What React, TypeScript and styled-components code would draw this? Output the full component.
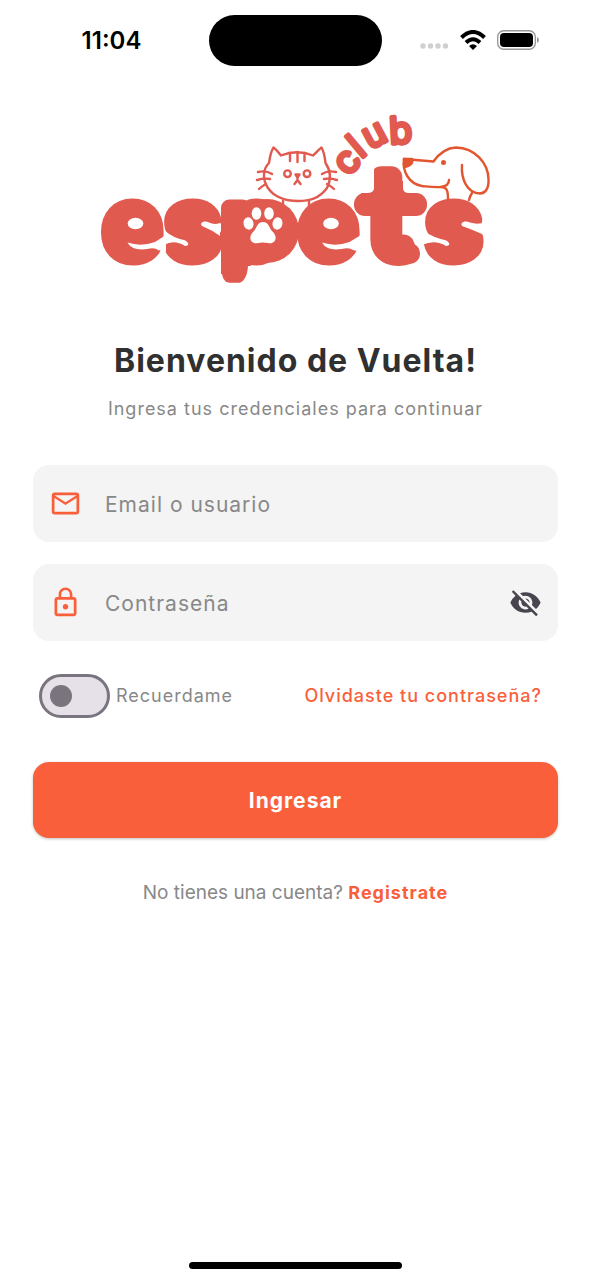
import React, { useState } from "react";
import styled, { createGlobalStyle } from "styled-components";
import { MdLockOutline, MdMailOutline, MdVisibility, MdVisibilityOff } from "react-icons/md";

const accent = "#fa5f3c";
const logoRed = "#e15a50";

const GlobalStyle = createGlobalStyle`
  * { box-sizing: border-box; }
  body {
    margin: 0;
    background: #fff;
    font-family: Inter, "Liberation Sans", sans-serif;
  }
  button, input { font: inherit; }
`;

const Screen = styled.div`
  min-height: 100vh;
  display: flex;
  flex-direction: column;
`;

const StatusBar = styled.header`
  display: grid;
  grid-template-columns: 1fr 173px 1fr;
  align-items: center;
  height: 80px;
`;

const Clock = styled.time`
  padding-left: 14px;
  text-align: center;
  font-size: 24px;
  font-weight: 600;
  color: #000;
`;

const Island = styled.div`
  height: 51px;
  border-radius: 26px;
  background: #000;
`;

const StatusIcons = styled.div`
  display: flex;
  align-items: center;
  justify-content: flex-end;
  gap: 10px;
  padding-right: 51px;
`;

const Main = styled.main`
  flex: 1;
  display: flex;
  flex-direction: column;
  align-items: center;
  padding: 25px 33px 0;
`;

const Logo = styled.svg`
  display: block;
  width: 400px;
  max-width: 100%;
  height: auto;
`;

const Title = styled.h1`
  margin: 51px 0 0;
  font-size: 32px;
  line-height: 40px;
  font-weight: 700;
  letter-spacing: 1px;
  color: #303030;
`;

const Subtitle = styled.p`
  margin: 16px 0 0;
  font-size: 18px;
  line-height: 24px;
  letter-spacing: 1px;
  color: #888;
`;

const Form = styled.form`
  align-self: stretch;
  display: flex;
  flex-direction: column;
  gap: 22px;
  margin-top: 44px;
`;

const Field = styled.label`
  display: flex;
  align-items: center;
  height: 77px;
  padding: 0 16px;
  border-radius: 16px;
  background: #f4f4f4;
  color: ${accent};
`;

const FieldInput = styled.input`
  flex: 1;
  min-width: 0;
  margin-left: 23px;
  padding: 2px 0 0;
  border: 0;
  outline: 0;
  background: none;
  font-size: 21px;
  letter-spacing: 1px;
  color: #303030;
  &::placeholder { color: #888; opacity: 1; }
`;

const IconButton = styled.button`
  display: flex;
  padding: 0;
  border: 0;
  background: none;
  color: #49454f;
  cursor: pointer;
`;

const Options = styled.div`
  display: flex;
  align-items: center;
  justify-content: space-between;
  margin-top: 11px;
  padding: 0 16px 0 6px;
  font-size: 18px;
  line-height: 24px;
  letter-spacing: 1px;
`;

const Remember = styled.label`
  display: flex;
  align-items: center;
  gap: 6px;
  color: #888;
`;

const Switch = styled.input`
  appearance: none;
  display: flex;
  align-items: center;
  width: 71px;
  height: 44px;
  margin: 0;
  padding: 0 8px;
  border: 3px solid #79747e;
  border-radius: 22px;
  background: #e6e0e9;
  cursor: pointer;
  &::before {
    content: "";
    width: 22px;
    height: 22px;
    border-radius: 50%;
    background: #79747e;
  }
  &:checked { justify-content: flex-end; background: ${accent}; border-color: ${accent}; }
  &:checked::before { background: #fff; }
`;

const TextLink = styled.a<{ $weight: number }>`
  color: ${accent};
  font-size: 18px;
  font-weight: ${(p) => p.$weight};
  letter-spacing: 1px;
  text-decoration: none;
`;

const Submit = styled.button`
  height: 76px;
  margin-top: 22px;
  border: 0;
  border-radius: 16px;
  background: ${accent};
  box-shadow: 0 1px 3px rgba(0, 0, 0, 0.25);
  color: #fff;
  font-size: 21px;
  font-weight: 700;
  letter-spacing: 1px;
  cursor: pointer;
`;

const SignUp = styled.p`
  margin: 43px 0 0;
  font-size: 19px;
  line-height: 24px;
  color: #888;
`;

const HomeIndicator = styled.div`
  width: 36%;
  height: 7px;
  margin: 0 auto 11px;
  border-radius: 4px;
  background: #000;
`;

function BrandLogo() {
  return (
    <Logo viewBox="95 105 400 185" role="img" aria-label="espets club">
      <g fontFamily='Inter, "Liberation Sans", sans-serif' fontWeight="700" fill={logoRed} stroke={logoRed} strokeLinejoin="round">
        <text fontSize="88" y="256" strokeWidth="17" x="105 167 223 301">espe</text>
        <text fontSize="113" fontWeight="400" y="254" x="370" strokeWidth="22">t</text>
        <text fontSize="88" y="256" x="428" strokeWidth="17">s</text>
      </g>
      <g fill="#fff">
        <path d="M350 168H373V188Q373 193 366 193H350Z" />
        <path d="M422 168H402V188Q402 193 408 193H422Z" />
        <path d="M218 274H221Q222 284 233 284V287H218Z" />
        <path d="M254 266H247Q246 284 233 284V287H254Z" />
      </g>
      <rect x="353" y="193" width="73" height="23" rx="11" fill={logoRed} />
      <rect x="384" y="243" width="35" height="21" rx="10" fill={logoRed} />
      <circle cx="266" cy="231" r="32" fill={logoRed} />
      <text
        fontFamily='Inter, "Liberation Sans", sans-serif'
        fontSize="37"
        fontWeight="400"
        fill={logoRed}
        stroke={logoRed}
        strokeWidth="4"
        strokeLinejoin="round"
        x="348 360 369 389"
        y="177 159 150 144"
        rotate="-50 -40 -28 -3"
      >
        club
      </text>
      {/* openings of the rounded wordmark */}
      <g fill="#fff">
        <ellipse cx="134.500" cy="223.500" rx="7.800" ry="5.800" />
        <ellipse cx="330" cy="223.500" rx="7.800" ry="5.800" />
        <path d="M126.500 242.500Q140 247 154 242L165 235V252L157 250Q154 247 146 249Q131 251 126.500 242.500Z" />
        <path d="M321 242.500Q334.500 247 348.500 242L360 235V252L352 250Q348.500 247 340.500 249Q325.500 251 321 242.500Z" />
        <path d="M219 223Q213 225 208 222.500C203 220 198 223 201 226Q211 230 219 236Z" />
        <path d="M163 230Q172 238 183 240C188 242 189 246 184 246Q173 239 163 245Z" />
        <path d="M485 222Q477 225 469 222.500C463 220 459 223 461 226Q475 231 485 236Z" />
        <path d="M421 230Q433 238 444 240C449 242 450 246 445 246Q434 239 421 245Z" />
      </g>
      <g fill="#fff">
        <ellipse cx="247.5" cy="223.5" rx="5" ry="6.2" transform="rotate(-12 247.5 223.5)" />
        <ellipse cx="255.5" cy="213.5" rx="4.8" ry="6.2" />
        <ellipse cx="268" cy="213.5" rx="4.8" ry="6.2" />
        <ellipse cx="276.5" cy="223.5" rx="5" ry="6.2" transform="rotate(12 276.5 223.5)" />
        <path d="M262 222c-6 0-6 6-9 9-7 6-3 14 4 12q5-1 10 0c7 2 11-6 4-12-3-3-3-9-9-9Z" />
      </g>
      <g fill="none" stroke={logoRed} strokeWidth="2.4" strokeLinecap="round" strokeLinejoin="round">
        <path d="M268 163C269 156 270 151 272.500 147.500C276 150 278 153 280 155.500Q296 149 312 155.500C315 153 317 150 320.500 147.500C323 152 324 158 324.500 163C330 171 330 180 326 188C318 199 308 201 297 201C285 201 273 197 267 188C261 179 262 169 268 163Z" />
        <path d="M289 153v8M296.500 152v10M303.500 153v8M282 201v8M308 201v8" />
        <circle cx="286.500" cy="173.700" r="3.300" />
        <circle cx="306" cy="173.700" r="3.300" />
        <path d="M294.500 174.500h4l-2 3ZM296.500 177v4M293.500 184l3-4 3 4" />
        <path d="M257 172q8-2 14 2M256 180q7-2 13-1M258 189q3-3 7-5M335 172q-8-2-14 2M336 180q-7-2-13-1M333 189q-3-3-7-5" />
      </g>
      <g fill="none" stroke="#e2552f" strokeWidth="2.400" strokeLinecap="round" strokeLinejoin="round">
        <path d="M403 159L432.500 161.500Q442 148 455 147.500C474 148 487 163 487.500 179C488 189 484 193.500 479 193.500C466 193 460 179 461 165" />
        <path d="M403 159C401 171 408 184 421 186C431 187 448 190 448 180M440 187C447 187 447 193 447 200M471 193Q469 196 468 200" />
        <path d="M403 159h8q2 6-7 8Z" fill="#e2552f" />
        <circle cx="442.500" cy="162.500" r="1.300" fill="#e2552f" />
      </g>
    </Logo>
  );
}

function SystemIcons() {
  return (
    <StatusIcons>
      <svg width="32" height="20" viewBox="0 0 32 20" fill="#cfcfcf" aria-hidden="true">
        <circle cx="5" cy="16" r="2.700" />
        <circle cx="12.500" cy="16" r="2.700" />
        <circle cx="20" cy="16" r="2.700" />
        <circle cx="27.500" cy="16" r="2.700" />
      </svg>
      <svg width="27" height="20" viewBox="0 0 27 20" fill="none" stroke="#000" strokeWidth="4" aria-hidden="true">
        <path d="M1.500 7.500Q13-3.500 24.500 7.500M6 12.500Q13 6 20 12.500" />
        <path d="M13 20L9 16Q13 12.500 17 16Z" fill="#000" stroke="none" />
      </svg>
      <svg width="43" height="20" viewBox="0 0 43 20" aria-hidden="true">
        <rect x="0.700" y="0.700" width="37.600" height="18.600" rx="6" fill="none" stroke="#999" strokeWidth="1.400" />
        <rect x="3" y="3" width="33" height="14" rx="4" />
        <path d="M40 7q2 1 2 3t-2 3Z" fill="#999" />
      </svg>
    </StatusIcons>
  );
}

export default function App() {
  const [visible, setVisible] = useState(false);
  return (
    <Screen>
      <GlobalStyle />
      <StatusBar>
        <Clock>11:04</Clock>
        <Island />
        <SystemIcons />
      </StatusBar>
      <Main>
        <BrandLogo />
        <Title>Bienvenido de Vuelta!</Title>
        <Subtitle>Ingresa tus credenciales para continuar</Subtitle>
        <Form onSubmit={(e) => e.preventDefault()}>
          <Field>
            <MdMailOutline size={33} />
            <FieldInput type="text" placeholder="Email o usuario" aria-label="Email o usuario" />
          </Field>
          <Field>
            <MdLockOutline size={33} />
            <FieldInput type={visible ? "text" : "password"} placeholder="Contraseña" aria-label="Contraseña" />
            <IconButton type="button" aria-label="Mostrar contraseña" onClick={() => setVisible(!visible)}>
              {visible ? <MdVisibility size={33} /> : <MdVisibilityOff size={33} />}
            </IconButton>
          </Field>
          <Options>
            <Remember>
              <Switch type="checkbox" role="switch" />
              Recuerdame
            </Remember>
            <TextLink href="#recuperar" $weight={500}>Olvidaste tu contraseña?</TextLink>
          </Options>
          <Submit type="submit">Ingresar</Submit>
        </Form>
        <SignUp>
          No tienes una cuenta? <TextLink href="#registro" $weight={700}>Registrate</TextLink>
        </SignUp>
      </Main>
      <HomeIndicator />
    </Screen>
  );
}
